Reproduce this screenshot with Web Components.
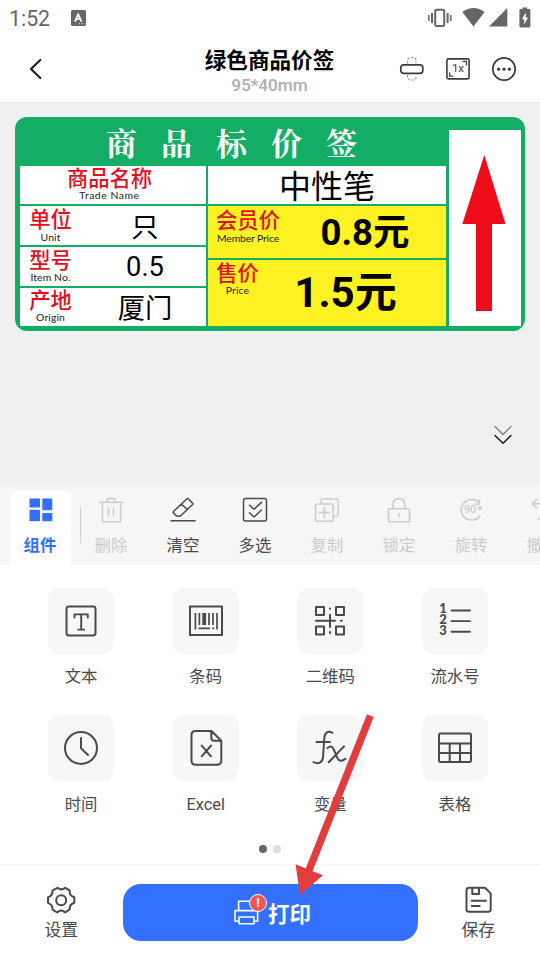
<!DOCTYPE html>
<html lang="zh-CN">
<head>
<meta charset="utf-8">
<title>绿色商品价签</title>
<style>
html,body{margin:0;height:100%;overflow:hidden;background:#fff}
body{font-family:Roboto,"Noto Sans CJK SC",sans-serif;color:#4a4a4c}
</style>
</head>
<body>
<label-editor></label-editor>
<script>
const define = (name, html) => {
  customElements.define(name, class extends HTMLElement {
    connectedCallback() {
      if (this.shadowRoot) return;
      const t = document.createElement('template');
      t.innerHTML = typeof html === 'function' ? html(this) : html;
      this.attachShadow({mode: 'open'}).append(t.content.cloneNode(true));
    }
  });
};

/* name: [width, height, stroke width, markup] */
const ICONS = {
  ime: [15,16,0,'<rect width="15" height="16" rx="1.5" fill="#666" stroke="none"/><path d="M4.2 11 7.2 4 10.2 11M5.2 8.8h4" stroke="#fff" stroke-width="1.8"/><path d="M8 13.8h1M10.5 13.8h1M13 13.8h.6" stroke="#fff" stroke-width="1.1" stroke-linecap="butt"/>'],
  vibrate: [26,20,0,'<rect x="8.2" y="1.7" width="9" height="16.4" rx="1.4" stroke="#666" stroke-width="2"/><path d="M5 5v10M20.6 5v10" stroke="#666" stroke-width="2" stroke-linecap="butt"/><path d="M1.8 7v6M23.7 7v6" stroke="#777" stroke-width="1.8" stroke-linecap="butt"/>'],
  wifi: [23,19,0,'<path d="M0.3 4Q11.5-3.8 22.6 4L11.5 18.6Z" fill="#666" stroke="none"/>'],
  signal: [19,19,0,'<path d="M0 18.5 18.3 0V18.5Z" fill="#666" stroke="none"/>'],
  battery: [12,21,0,'<path d="M3.5 2V0.5h4.6V2H10a1.4 1.4 0 0 1 1.4 1.4V19a1.4 1.4 0 0 1-1.4 1.4H1.8A1.4 1.4 0 0 1 .4 19V3.4A1.4 1.4 0 0 1 1.8 2Z" fill="#666" stroke="none"/><path d="M6.8 5.5 3 12.2h2.2v5.2L9 10.6H6.8Z" fill="#fff" stroke="none"/>'],
  back: [14,22,2.2,'<path d="M12.3 2 3 11l9.3 9"/>'],
  flip: [26,26,1.7,'<rect x="1.8" y="8.8" width="22" height="8.6" rx="2.8"/><path d="M8.6 7.5V5Q8.6 1.5 11.6 1.5H14Q17 1.5 17 5v2.5M8.6 18.5v2Q8.6 24 11.6 24H14q3 0 3-3.5v-2" stroke="#999" stroke-width="1.2" stroke-dasharray="2.5 1.5" stroke-linecap="butt"/>'],
  scale: [26,24,1.6,'<rect x="1.9" y="1.9" width="22.2" height="20" rx="1.6"/><path d="M18.2 4.3h3.3v3.5M4.6 15.8v3.4h3" stroke-width="1.3"/>'],
  more: [26,26,1.7,'<circle cx="13" cy="13" r="11.2"/><g fill="#3c3c3e" stroke="none"><circle cx="7.6" cy="13.2" r="1.6"/><circle cx="13" cy="13.2" r="1.6"/><circle cx="18.4" cy="13.2" r="1.6"/></g>'],
  down: [18,20,1.2,'<path d="M1 1.5 9 9.5 17 1.5" stroke="#777"/><path d="M1 10.5 9 18.3 17 10.5" stroke="#111" stroke-width="1.4"/>'],
  uparrow: [44,158,0,'<path d="M22.3 1 43.5 70H30V157H14V70H0.3Z" fill="#ee0c1b" stroke="none"/>'],
  blocks: [24,24,0,'<g fill="#3370ff" stroke="none"><rect x=".5" y=".5" width="10.5" height="9" rx=".6"/><rect x="13.3" y=".5" width="10" height="11.8" rx=".6"/><rect x=".5" y="11.8" width="10.5" height="11.5" rx=".6"/><rect x="13.3" y="15" width="10" height="8.3" rx=".6"/></g>'],
  trash: [25,26,1.5,'<path d="M.6 5.3h23.5M8.3 5V2.7Q8.3 1.6 9.3 1.6h6Q16.4 1.6 16.4 2.7V5M3.4 5.5V24.8H21.6V5.5M9.5 10.8v7.6M14.5 10.8v7.6"/>'],
  erase: [26,26,1.5,'<path d="M1 23.7H25M4 14 17 1.7Q17.6 1.2 18.2 1.8L22.6 6.2Q23.2 6.8 22.6 7.5L10.5 19H6.5L3.4 15.9Q2.7 15 4 14ZM11.5 7.2 17.5 12.6"/>'],
  multi: [26,26,1.5,'<rect x="1.5" y="1.5" width="23" height="22.5" rx="2"/><path d="M7.5 8.2 12 12.3 19.5 5.4M7.5 15.8 12 20 19.5 13"/>'],
  copy: [26,26,1.5,'<rect x="1.5" y="7" width="17.7" height="17.3" rx="1.8"/><path d="M7 6.5V3.3Q7 1.9 8.4 1.9H22.6Q24.1 1.9 24.1 3.4V17.5Q24.1 19.2 22.4 19.2H20M10.4 10.3v10.6M5 15.6h10.7"/>'],
  lock: [24,26,1.6,'<rect x="1.5" y="11.8" width="21" height="13" rx="1.4"/><path d="M6 11.5V7Q6.4 1.6 11.9 1.6T17.8 7v4.5M12 16.7v3"/>'],
  rotate: [24,24,1.5,'<path d="M20.6 5.3A10.4 10.4 0 1 0 20.8 18.3M19.8 1.8l.8 4.2-4 .3"/><circle cx="20.9" cy="10" r="1.2"/>'],
  undo: [24,24,1.5,'<path d="M5.5 1.5 1.3 5.7 5.5 9.9M2 5.7H16Q22 6 22 13T16 21H7"/>'],
  text: [32,32,2,'<rect x="1.5" y="1.5" width="29" height="29" rx="2.4"/><path d="M9.5 12.5V9.4H22.8v3.1M16.2 9.5v15M13.2 24.6h6" stroke-width="1.9"/>'],
  barcode: [36,32,2,'<rect x="2" y="1.5" width="32" height="28.5"/><path d="M7.4 8v16.500M11.400 8v12M21 8v12M25 8v12M29 8v16.500" stroke-width="1.700" stroke-linecap="butt"/><path d="M16.200 8v12" stroke-width="3.800" stroke-linecap="butt"/><path d="M10.500 23.300H22M24.300 23.300h2" stroke-width="1.700" stroke-linecap="butt"/>'],
  qr: [32,32,2,'<rect x="2" y="2" width="8" height="8"/><rect x="22" y="2" width="8" height="8"/><rect x="2" y="21.500" width="8" height="8"/><rect x="22" y="21.500" width="8" height="8"/><path d="M2 15.800H21M27 15.800h.8M16 9.700v12.300M16 3.500v.2M16 27v1"/>'],
  serial: [34,34,1.900,'<path d="M13.500 6.500H32M13.500 17.100H32M13.500 27.700H32"/>'],
  clock: [36,36,2,'<circle cx="18" cy="18" r="16"/><path d="M18 8v10.300l7 6.700"/>'],
  excel: [34,38,2,'<path d="M22 2H6.500Q2.500 2 2.500 6V31.500Q2.500 35.700 6.500 35.700H28Q32.300 35.700 32.300 31.500V11.800L22.500 2ZM22.300 2.500V9Q22.300 11.700 25 11.700H31.500M12.700 16.600 22 27.300M22 16.600 12.700 27.300"/>'],
  fx: [36,36,2,'<path d="M20.300 2.700Q13.500-.5 12.300 8L11 27.500Q9.500 35.500 1.500 32.200M4.500 12H18M15.500 18Q19.500 14.500 21.500 19L25.500 28.300Q28 33 33.500 28.800M32 16.400 16.700 32.200"/>'],
  table: [36,32,2,'<rect x="2" y="1.500" width="32" height="28.600" rx="1.400"/><path d="M2 11.600H34M2 20.900H34M12.700 11.600V30M23 11.600V30"/>'],
  gear: [30,30,2,'<path d="M11.600 1.800Q15.400 5 19.200 1.800L23.700 4.300Q23 9.400 28.300 11.300V16.700Q23 18.700 23.700 23.400L19.200 26.500Q15 22.600 11.300 26.500L6.500 23.700Q7.100 18.900 2 16.800V11.300Q7.100 9.200 6.500 4.300Z"/><circle cx="15.200" cy="14.200" r="5"/>'],
  save: [28,28,2,'<path d="M5.500 1.700H20L25.700 7.400V23.300Q25.700 25.800 23.200 25.800H4Q1.500 25.800 1.500 23.300V4.200Q1.500 1.700 4 1.700ZM7.300 2V8H14V2M6.700 14.800H21M6.700 19.900H14.700"/>'],
  printer: [27,26,1.600,'<path d="M5.600 10V1.200H20V10M6 21.300H2V10.600H24.600V21.300H21M6 17H21V23.700H6Z"/>']
};
define('ui-icon', el => {
  const [w, h, s, body] = ICONS[el.getAttribute('name')];
  return `<style>:host{display:block;flex:none;width:${w}px;height:${h}px}svg{display:block;overflow:visible}</style>
  <svg width="${w}" height="${h}" viewBox="0 0 ${w} ${h}" fill="none" stroke="currentColor" stroke-width="${s}" stroke-linecap="round" stroke-linejoin="round">${body}</svg>`;
});

define('status-bar', `<style>
:host{display:flex;align-items:center;height:36px;box-sizing:border-box;padding:0 9px 1px;color:#666}
.time{font-size:21.300px;line-height:24px;width:62px;padding-top:3px}
.right{display:flex;align-items:center;margin-left:auto;gap:9px}
.right .sig{margin-left:-5px}.right .bat{margin-left:2px}
</style><span class="time">1:52</span><ui-icon name="ime" style="margin-top:1px"></ui-icon>
<div class="right"><ui-icon name="vibrate"></ui-icon><ui-icon name="wifi"></ui-icon><ui-icon class="sig" name="signal"></ui-icon><ui-icon class="bat" name="battery"></ui-icon></div>`);

define('title-bar', `<style>
:host{display:grid;grid-template-columns:170px 199px 171px;height:66px;color:#3c3c3e}
.back{padding:22px 0 0 28px;color:#222}
.mid{text-align:center;padding-top:10px}
h1{margin:0;font:700 21.600px/26px "Noto Sans CJK SC",sans-serif;color:#000}
p{margin:0;font-size:17.200px;line-height:22px;font-weight:500;color:#b0b0b0;padding-top:2px}
.acts{display:flex;justify-content:flex-end;align-items:center;padding:0 23px 0 0;gap:20px}
.scale{display:grid;place-items:center}.scale>*{grid-area:1/1}
.scale span{font-size:11.500px;line-height:14px;margin-top:-2px}
</style><div class="back"><ui-icon name="back"></ui-icon></div>
<div class="mid"><h1><slot></slot></h1><p><slot name="size"></slot></p></div>
<div class="acts"><ui-icon name="flip"></ui-icon><div class="scale"><ui-icon name="scale"></ui-icon><span>1x</span></div><ui-icon name="more"></ui-icon></div>`);

define('tag-caption', `<style>
:host{display:flex;flex-direction:column;align-items:center;white-space:nowrap;width:var(--w,64px);flex:none}
b{font:500 21.300px/20px Roboto,"Noto Sans CJK SC",sans-serif;color:#e0101f;padding:3px 0 0}
span{font:400 10.400px/12px Lato,sans-serif;color:#222;margin-top:var(--gap,0px);letter-spacing:var(--ls,.1px)}
</style><b><slot></slot></b><span><slot name="en"></slot></span>`);

define('price-tag', `<style>
:host{display:flex;box-sizing:border-box;width:510px;height:214px;background:#13ad65;border-radius:12px;padding:0 4px 5px 5px;gap:3px;color:#000}
.main{width:426px}
h2{margin:0;height:49px;padding:0 0 0 86px;display:flex;align-items:center;gap:24px;font:700 31px/44px "Noto Serif CJK SC","Source Han Serif SC","Noto Sans CJK SC",serif;color:#fff;box-sizing:border-box}
h2 span{width:31px}
.grid{display:grid;grid-template-columns:186px 238px;gap:2px}
.col{display:flex;flex-direction:column;gap:2px}
.cell{display:flex;align-items:flex-start;background:#fff;box-sizing:border-box;height:39px;white-space:nowrap}
.y{background:#fff222}
.v{flex:1;text-align:center;font-size:27.300px;line-height:37px;padding-left:3px}
.cjk{font-family:"Noto Sans CJK SC",sans-serif}
.strip{width:72px;height:196px;margin-top:13px;background:#fff;display:flex;justify-content:center;align-items:flex-start;box-sizing:border-box;padding:24px 2px 0 0}
i{font-style:normal}
</style>
<div class="main"><h2><span>商</span><span>品</span><span>标</span><span>价</span><span>签</span></h2>
<div class="grid">
<div class="col">
<div class="cell" style="height:38px;justify-content:center;padding:0 7px 0 0"><tag-caption style="--w:100px;--ls:.55px">商品名称<i slot="en">Trade Name</i></tag-caption></div>
<div class="cell" style="padding-top:1px"><tag-caption style="--w:61px;--gap:1px">单位<i slot="en">Unit</i></tag-caption><span class="v cjk">只</span></div>
<div class="cell" style="padding-top:1px"><tag-caption style="--w:61px">型号<i slot="en">Item No.</i></tag-caption><span class="v" style="line-height:39px">0.5</span></div>
<div class="cell" style="height:38px;padding-top:0"><tag-caption style="--w:61px">产地<i slot="en">Origin</i></tag-caption><span class="v cjk" style="line-height:36px">厦门</span></div>
</div>
<div class="col">
<div class="cell" style="height:38px"><span class="v cjk" style="font-size:32px;line-height:37px;padding:0">中性笔</span></div>
<div class="cell y" style="height:52px;padding:2px 0 0 8px"><tag-caption style="--ls:-.15px;--gap:1px">会员价<i slot="en">Member Price</i></tag-caption><b class="v" style="font-size:36.500px;line-height:49px;padding-left:4px">0.8元</b></div>
<div class="cell y" style="height:66px;padding:1px 0 0 8px"><tag-caption style="--w:43px">售价<i slot="en">Price</i></tag-caption><b class="v" style="font-size:42px;line-height:63px;padding:0 14px 0 0">1.5元</b></div>
</div></div></div>
<div class="strip"><ui-icon name="uparrow"></ui-icon></div>`);

define('tool-item', `<style>
:host{display:flex;flex-direction:column;align-items:center;width:72px;flex:none;color:#4a4a4c}
:host([off]){color:#cbcbcd}
.i{height:26px;display:grid;place-items:center}
::slotted([slot=icon]),::slotted([slot=over]){grid-area:1/1}
::slotted([slot=over]){font:500 10.500px/12px Roboto,sans-serif;padding-right:2px}
.t{font:400 16.400px/24px "Noto Sans CJK SC",sans-serif;white-space:nowrap;margin-top:9px}
:host([active]) .t{font-weight:700;color:#3370ff;padding-right:1px}
</style><div class="i"><slot name="icon"></slot><slot name="over"></slot></div><span class="t"><slot></slot></span>`);

define('tool-bar', `<style>
:host{display:flex;height:81px;background:#f6f6f6;overflow:hidden;box-sizing:border-box;padding:6px 0 0 10px}
.tab{width:61px;background:#fff;border-radius:8px 8px 0 0;display:flex;justify-content:center;padding-top:7px;flex:none}
.sep{width:1.500px;height:36px;background:#cfcfd4;margin:17px -6px 0 8.500px;flex:none}
.list{display:flex;padding-top:7px}
</style><div class="tab"><tool-item active><ui-icon slot="icon" name="blocks"></ui-icon>组件</tool-item></div><div class="sep"></div>
<div class="list">
<tool-item off><ui-icon slot="icon" name="trash"></ui-icon>删除</tool-item>
<tool-item><ui-icon slot="icon" name="erase"></ui-icon>清空</tool-item>
<tool-item><ui-icon slot="icon" name="multi"></ui-icon>多选</tool-item>
<tool-item off><ui-icon slot="icon" name="copy"></ui-icon>复制</tool-item>
<tool-item off><ui-icon slot="icon" name="lock"></ui-icon>锁定</tool-item>
<tool-item off><ui-icon slot="icon" name="rotate"></ui-icon><span slot="over">90</span>旋转</tool-item>
<tool-item off><ui-icon slot="icon" name="undo"></ui-icon>撤销</tool-item></div>`);

define('widget-tile', `<style>
:host{display:flex;flex-direction:column;align-items:center;height:127.500px}
.box{width:66px;height:66px;border-radius:12px;background:#f7f7f7;display:grid;place-items:center}
::slotted([slot]){grid-area:1/1}
.t{font:400 16.400px/24px Roboto,"Noto Sans CJK SC",sans-serif;margin-top:11.500px}
</style><div class="box"><slot name="icon"></slot><slot name="over"></slot></div><div class="t"><slot></slot></div>`);

define('widget-grid', `<style>
:host{display:block;height:300px;box-sizing:border-box;padding:22.500px 22px 0 18.700px;border-bottom:1px solid #f7f7f7}
.g{display:grid;grid-template-columns:repeat(4,124.660px)}
.nums{display:flex;flex-direction:column;font:900 13px/10.700px Lato,"Noto Sans",sans-serif;padding:0 24px 2px 0}
.dots{display:flex;justify-content:center;gap:6px;padding-top:2.500px;margin-left:3px}
.dots i{width:8px;height:8px;border-radius:50%;background:#666}.dots i+i{background:#ddd}
</style><div class="g">
<widget-tile><ui-icon slot="icon" name="text"></ui-icon>文本</widget-tile>
<widget-tile><ui-icon slot="icon" name="barcode"></ui-icon>条码</widget-tile>
<widget-tile><ui-icon slot="icon" name="qr"></ui-icon>二维码</widget-tile>
<widget-tile><ui-icon slot="icon" name="serial"></ui-icon><div slot="over" class="nums"><span>1</span><span>2</span><span>3</span></div>流水号</widget-tile>
<widget-tile><ui-icon slot="icon" name="clock"></ui-icon>时间</widget-tile>
<widget-tile><ui-icon slot="icon" name="excel"></ui-icon>Excel</widget-tile>
<widget-tile><ui-icon slot="icon" name="fx"></ui-icon>变量</widget-tile>
<widget-tile><ui-icon slot="icon" name="table"></ui-icon>表格</widget-tile>
</div><div class="dots"><i></i><i></i></div>`);

define('bottom-bar', `<style>
:host{display:flex;height:95px;box-sizing:border-box;padding-top:18.500px;align-items:flex-start}
.side{width:122.500px;display:flex;flex-direction:column;align-items:center;font:400 16.800px/24px "Noto Sans CJK SC",sans-serif;padding-top:2px;box-sizing:border-box}
.btn{width:295px;height:57px;border-radius:18px;background:#3370ff;color:#fff;display:flex;align-items:center;justify-content:center;font:700 21.500px/30px "Noto Sans CJK SC",sans-serif;gap:8px;padding-left:4px;box-sizing:border-box}
.p{position:relative;padding-top:2px}
.badge{position:absolute;left:16px;top:-4px;width:16px;height:16px;border:1px solid #fff;border-radius:50%;background:#ff5252;font:700 13px/16px Roboto,sans-serif;text-align:center}
</style><div class="side"><ui-icon name="gear"></ui-icon><span style="margin-top:1px">设置</span></div>
<div class="btn"><div class="p"><ui-icon name="printer"></ui-icon><div class="badge">!</div></div><span style="padding-top:2px">打印</span></div>
<div class="side" style="padding-right:1px"><ui-icon name="save" style="margin:0 0 2px 2px"></ui-icon><span style="margin-top:1px">保存</span></div>`);

/* Guide arrow that points at the print button, over the page. */
define('guide-arrow', `<style>:host{position:absolute;left:295px;top:714px;pointer-events:none}svg{display:block}</style>
<svg width="80" height="182" viewBox="295 714 80 182"><path d="M367 714.300 373.700 717 312.600 871.200 323 875.300 300 895 295.600 864.200 305.700 868.400Z" fill="#e23d3d"/></svg>`);

define('label-editor', `<style>
:host{display:flex;flex-direction:column;position:relative;width:540px;height:960px;overflow:hidden;background:#fff}
.canvas{height:382px;box-sizing:border-box;background:#f0f0f0;padding:15px 15px 0;display:flex;flex-direction:column;justify-content:space-between;flex:none}
.down{align-self:flex-end;margin:0 13px 39px 0}
</style><status-bar></status-bar><title-bar>绿色商品价签<span slot="size">95*40mm</span></title-bar>
<div class="canvas"><price-tag></price-tag><ui-icon class="down" name="down"></ui-icon></div>
<tool-bar></tool-bar><widget-grid></widget-grid><bottom-bar></bottom-bar><guide-arrow></guide-arrow>`);
</script>
</body>
</html>
